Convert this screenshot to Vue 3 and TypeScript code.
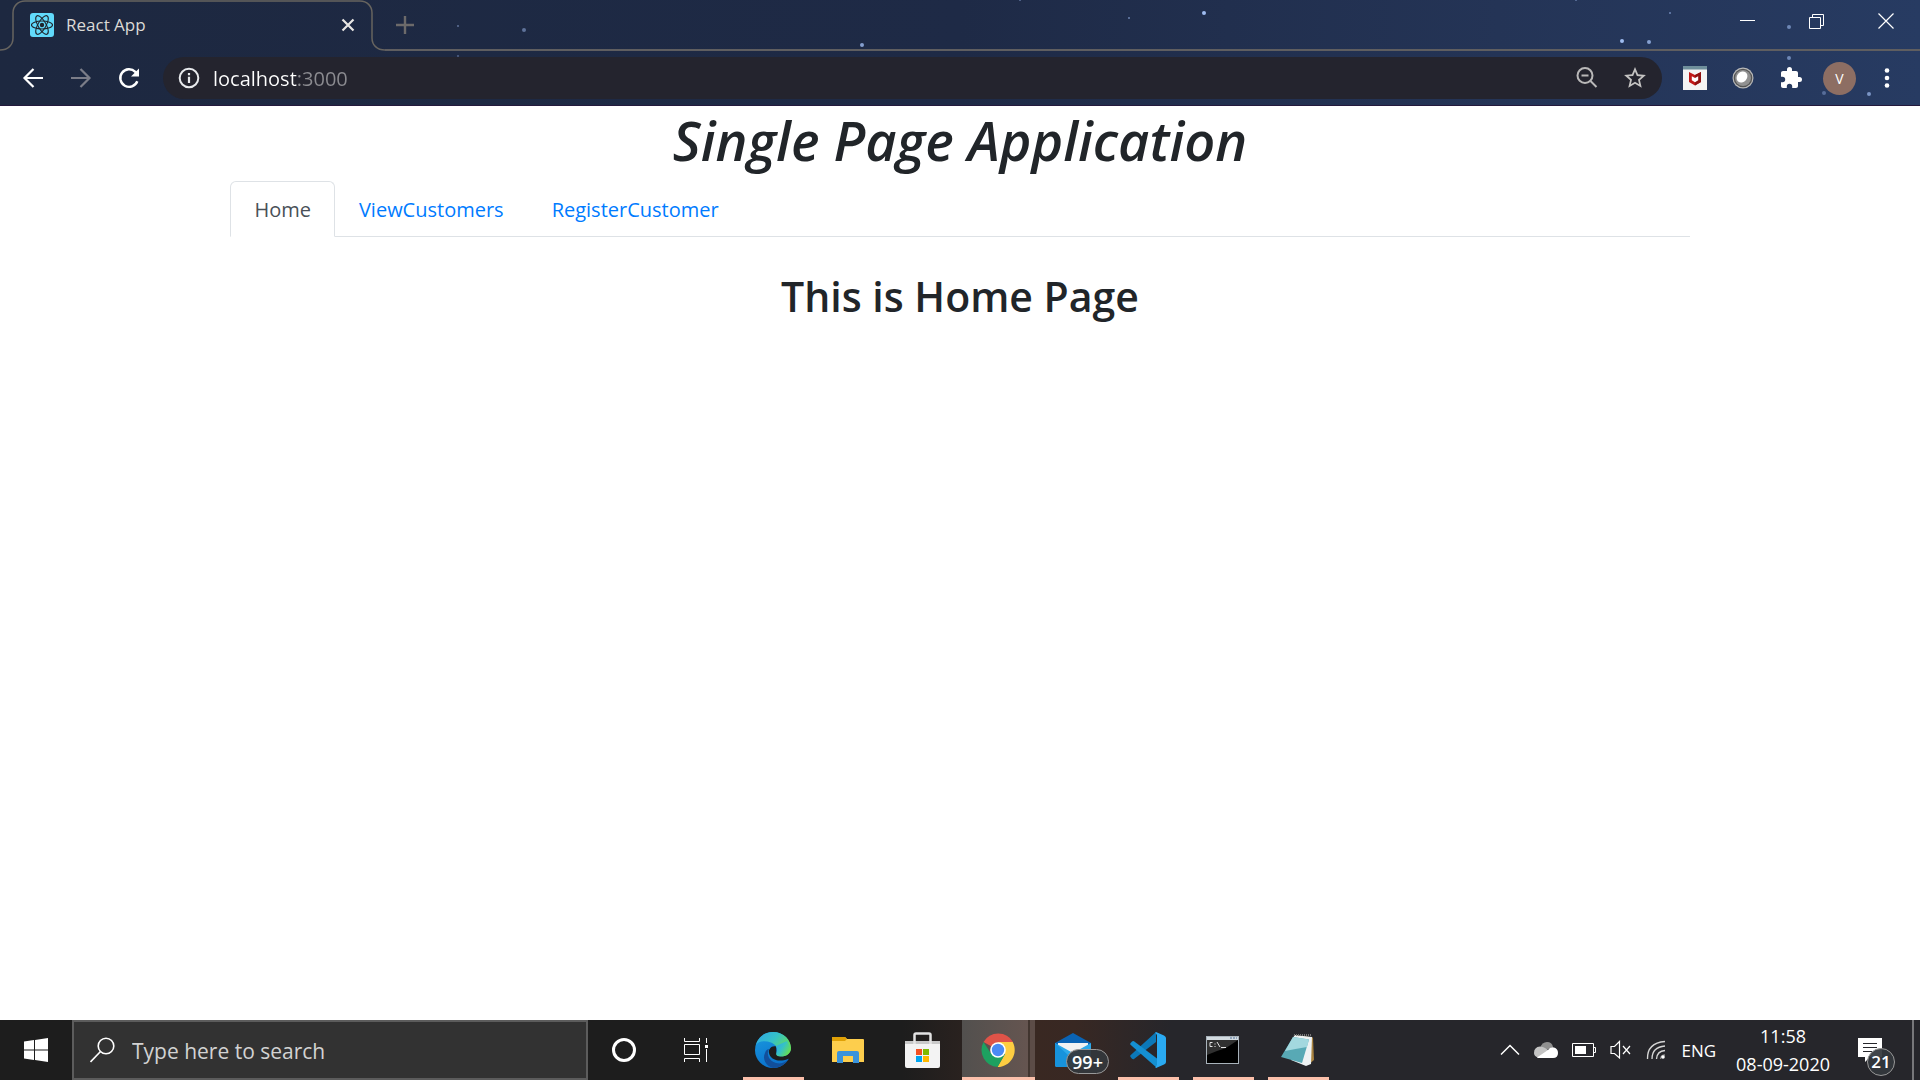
<script setup lang="ts">
import { ref } from 'vue'

interface Star { x: number; y: number; r: number; o: number }
interface Page { id: string; label: string; heading: string }

const stars: Star[] = [
  { x: 458, y: 26, r: 1, o: 0.5 },
  { x: 524, y: 30, r: 2, o: 0.5 },
  { x: 458, y: 56, r: 1, o: 0.4 },
  { x: 862, y: 45, r: 2, o: 0.8 },
  { x: 1020, y: 0, r: 1, o: 0.5 },
  { x: 1129, y: 18, r: 1, o: 0.6 },
  { x: 1204, y: 13, r: 2, o: 1 },
  { x: 1576, y: 0, r: 1, o: 0.5 },
  { x: 1670, y: 13, r: 1, o: 0.6 },
  { x: 1622, y: 41, r: 2, o: 1 },
  { x: 1649, y: 42, r: 2, o: 0.8 },
  { x: 1789, y: 27, r: 2, o: 0.6 },
  { x: 1789, y: 58, r: 2, o: 0.6 },
  { x: 1824, y: 93, r: 2, o: 0.4 },
  { x: 1869, y: 94, r: 2, o: 0.7 },
]

const pages: Page[] = [
  { id: 'home', label: 'Home', heading: 'This is Home Page' },
  { id: 'view', label: 'ViewCustomers', heading: 'This is ViewCustomers Page' },
  { id: 'register', label: 'RegisterCustomer', heading: 'This is RegisterCustomer Page' },
]
const current = ref<Page>(pages[0])
const address = ref('localhost:3000')
const query = ref('')
</script>

<template>
  <div class="screen">
    <header class="browser">
      <svg class="stars" width="1920" height="105" aria-hidden="true">
        <circle v-for="(s, i) in stars" :key="i" :cx="s.x" :cy="s.y" :r="s.r" :opacity="s.o" fill="#9fbcf0" />
      </svg>

      <div class="strip">
        <div class="tab">
          <svg class="outline" width="385" height="51" viewBox="0 0 385 51" fill="none" stroke="#67645f" stroke-width="1.5" aria-hidden="true">
            <path d="M0 50C8 50 13 45 13 38V13C13 6 18 1 25 1H360C367 1 372 6 372 13V38C372 45 377 50 385 50" />
          </svg>
          <svg width="24" height="24" viewBox="0 0 24 24" aria-hidden="true">
            <rect width="24" height="24" rx="3" fill="#61dafb" />
            <g fill="none" stroke="#20232a" stroke-width="1.1">
              <ellipse cx="12" cy="12" rx="10.5" ry="4" />
              <ellipse cx="12" cy="12" rx="10.5" ry="4" transform="rotate(60 12 12)" />
              <ellipse cx="12" cy="12" rx="10.5" ry="4" transform="rotate(120 12 12)" />
            </g>
            <circle cx="12" cy="12" r="2.2" fill="#20232a" />
          </svg>
          <span class="tab-title">React App</span>
          <button class="icon-btn" aria-label="Close tab">
            <svg width="24" height="24" viewBox="0 0 24 24" stroke="#e8e6e3" stroke-width="2.2"><path d="M6.500 6.500 17.500 17.500M17.500 6.500 6.500 17.500" /></svg>
          </button>
        </div>
        <div class="strip-rest">
          <button class="icon-btn new-tab" aria-label="New tab">
            <svg width="24" height="24" viewBox="0 0 24 24" stroke="#6c6a6a" stroke-width="2.4"><path d="M12 3V21M3 12H21" /></svg>
          </button>
          <div class="win">
            <button class="win-btn" aria-label="Minimize">
              <svg width="16" height="16" viewBox="0 0 16 16" stroke="#fff"><path d="M0 7.500H15" /></svg>
            </button>
            <button class="win-btn" aria-label="Restore">
              <svg width="16" height="16" viewBox="0 0 16 16" fill="none" stroke="#fff"><path d="M.5 4.500H11.500V15.500H.5ZM3.500 4.500V1.500H14.500V12.500H11.500" /></svg>
            </button>
            <button class="win-btn" aria-label="Close">
              <svg width="16" height="16" viewBox="0 0 16 16" stroke="#fff" stroke-width="1.2"><path d="M.5 .5 15.500 15.500M15.500 .5 .5 15.500" /></svg>
            </button>
          </div>
        </div>
      </div>

      <div class="toolbar">
        <div class="nav-btns">
          <button class="icon-btn" aria-label="Back">
            <svg width="24" height="24" viewBox="0 0 24 24" fill="none" stroke="#fff" stroke-width="2.2"><path d="M22 12H4M12.500 3 3.500 12 12.500 21" /></svg>
          </button>
          <button class="icon-btn" aria-label="Forward">
            <svg width="24" height="24" viewBox="0 0 24 24" fill="none" stroke="#7b7d88" stroke-width="2.2"><path d="M2 12H20M11.500 3 20.500 12 11.500 21" /></svg>
          </button>
          <button class="icon-btn" aria-label="Reload">
            <svg width="24" height="24" viewBox="0 0 24 24" fill="none" stroke="#fff" stroke-width="2.4"><path d="M20.300 15.200A8.800 8.800 0 1 1 18.300 5.800L20 7.500" /><path d="M22 2.500V10.500H14Z" fill="#fff" stroke="none" /></svg>
          </button>
        </div>
        <label class="omnibox">
          <svg width="24" height="24" viewBox="0 0 24 24" fill="none" stroke="#e8eaed" stroke-width="2"><circle cx="12" cy="12" r="9.300" /><path d="M12 10.800V17M12 7V9.200" stroke-width="2.2" /></svg>
          <input v-model="address" class="url" type="text" aria-label="Address" spellcheck="false" />
          <button class="icon-btn" aria-label="Zoom">
            <svg width="24" height="24" viewBox="0 0 24 24" fill="none" stroke="#b9b8b8" stroke-width="2"><circle cx="10" cy="9.500" r="7.500" /><path d="M6.500 9.500H13.500M15.500 15 21.500 21" /></svg>
          </button>
          <button class="icon-btn" aria-label="Bookmark">
            <svg width="24" height="24" viewBox="1 1 22 22" fill="#c4c3c2"><path d="M22 9.240l-7.190-.62L12 2 9.190 8.630 2 9.240l5.460 4.730L5.820 21 12 17.270 18.180 21l-1.630-7.030L22 9.240zM12 15.400l-3.760 2.270 1-4.280-3.320-2.880 4.380-.38L12 6.100l1.710 4.040 4.380.38-3.320 2.880 1 4.280L12 15.400z" /></svg>
          </button>
        </label>
        <div class="extensions">
          <button class="icon-btn" aria-label="McAfee WebAdvisor">
            <svg width="24" height="24" viewBox="0 0 24 24"><path d="M0 0H24V24H0Z" fill="#f4f4f4" /><path d="M0 0H24V3.500H0Z" fill="#6f8f9b" /><path d="M6 6 12 9 18 6V16L12 19.500 6 16Z" fill="#c01818" /><path d="M12 9 18 6V16L12 19.500Z" fill="#8f1212" /><path d="M8.800 10.200 12 12 15.200 10.200V14.300L12 16.200 8.800 14.300Z" fill="#fff" /></svg>
          </button>
          <button class="icon-btn" aria-label="Extension">
            <svg width="24" height="24" viewBox="0 0 24 24"><circle cx="12" cy="12" r="10.500" fill="#b9b9b9" /><circle cx="12" cy="12" r="9.300" fill="#555" /><circle cx="12" cy="12" r="8" fill="#919191" /><ellipse cx="11" cy="11" rx="5" ry="6" fill="#fff" transform="rotate(40 11 11)" /></svg>
          </button>
          <button class="icon-btn" aria-label="Extensions">
            <svg width="24" height="24" viewBox="0 0 24 24" fill="#fff"><path d="M20.500 11H19V7c0-1.100-.9-2-2-2h-4V3.500a2.500 2.500 0 0 0-5 0V5H4c-1.100 0-1.990.9-1.990 2v3.800H3.500a2.700 2.700 0 0 1 0 5.400H2V20c0 1.100.9 2 2 2h3.800v-1.500a2.700 2.700 0 0 1 5.400 0V22H17c1.100 0 2-.9 2-2v-4h1.500a2.500 2.500 0 0 0 0-5z" /></svg>
          </button>
          <button class="avatar" aria-label="Profile">V</button>
          <button class="icon-btn" aria-label="Menu">
            <svg width="24" height="24" viewBox="0 0 24 24" fill="#fff"><circle cx="11" cy="4.500" r="2.300" /><circle cx="11" cy="12" r="2.300" /><circle cx="11" cy="19.500" r="2.300" /></svg>
          </button>
        </div>
      </div>
    </header>

    <main class="page">
      <h1>Single Page Application</h1>
      <nav class="tabs">
        <a v-for="p in pages" :key="p.id" :href="'#' + p.id" class="link" :class="{ active: p.id === current.id }" @click="current = p">{{ p.label }}</a>
      </nav>
      <h2>{{ current.heading }}</h2>
    </main>

    <footer class="taskbar">
      <button class="start" aria-label="Start">
        <svg width="24" height="24" viewBox="0 0 24 24" fill="#fff"><path d="M0 3.400 10 2.100V11.500H0ZM11 2 24 0V11.500H11ZM0 12.500H10V21.900L0 20.600ZM11 12.500H24V24L11 22Z" /></svg>
      </button>
      <label class="search">
        <svg width="26" height="26" viewBox="0 0 26 26" fill="none" stroke="#fff" stroke-width="1.600"><circle cx="16" cy="9" r="7.800" /><path d="M10.500 14.500 .5 25" /></svg>
        <input v-model="query" type="text" placeholder="Type here to search" aria-label="Search" />
      </label>
      <button class="task" aria-label="Cortana">
        <svg width="26" height="26" viewBox="0 0 26 26" fill="none"><circle cx="13" cy="13" r="10.500" stroke="#fff" stroke-width="3" /></svg>
      </button>
      <button class="task" aria-label="Task View">
        <svg width="24" height="24" viewBox="0 0 24 24" fill="none" stroke="#fff"><path d="M.5 0V3.500H15.500V0M.5 24V20.500H15.500V24M.5 6.500H15.500V16.500H.5ZM22.500 0V5M22.500 11V24" /><path d="M21 7H24V10H21Z" fill="#fff" stroke="none" /></svg>
      </button>
      <div class="apps">
        <button class="app" aria-label="Microsoft Edge">
          <svg width="36" height="36" viewBox="0 0 36 36">
            <defs>
              <linearGradient id="edge-top" x1="0" y1="0" x2="1" y2="0.6"><stop offset="0" stop-color="#2fa6e6" /><stop offset="0.500" stop-color="#35c1c8" /><stop offset="1" stop-color="#68e04c" /></linearGradient>
              <linearGradient id="edge-left" x1="0" y1="0" x2="0.4" y2="1"><stop offset="0" stop-color="#1a9be0" /><stop offset="1" stop-color="#0b72cc" /></linearGradient>
            </defs>
            <circle cx="18" cy="18" r="18" fill="url(#edge-left)" />
            <path d="M1 13C3 5 10 0 18 0C29 0 36 8 36 16C36 22 31 24.500 26 24.500C22 24.500 20.500 23 21.500 21C24 16 20 12 16 10.500C10 8 3 9 1 13Z" fill="url(#edge-top)" />
            <path d="M14 17C11 22 14 29 21 31C27 32.500 31 30 33.500 27C30 33 24 36 18 36C11 34 7 27 10 21C11 18 12.500 17 14 17Z" fill="#124f9b" />
            <path d="M21 14.500C17 13 13 17 14 21C15 27 23 31 33 27L36 26V16C36 22 31 24.500 26 24.500C22 24.500 20.500 23 21.500 21Z" fill="#1d1d1d" />
            <path d="M21 14C24 18 20 21 22 23C26 26 36 24 36 16L32 9Z" fill="url(#edge-top)" />
          </svg>
          <span class="bar" />
        </button>
        <button class="app" aria-label="File Explorer">
          <svg width="32" height="28" viewBox="0 0 32 28"><path d="M0 2Q0 1 1 1H13L15 3H31Q32 3 32 4V26H0Z" fill="#fdce4d" /><path d="M0 2Q0 1 1 1H13L15 3 13 5H0Z" fill="#e0a106" /><path d="M5 27V17Q5 15 7 15H25Q27 15 27 17V27H21V20H11V27Z" fill="#3a93dc" /></svg>
        </button>
        <button class="app" aria-label="Microsoft Store">
          <svg width="36" height="36" viewBox="0 0 36 36"><path d="M0 9H35V34Q35 36 33 36H2Q0 36 0 34Z" fill="#f3f3f3" /><path d="M0 9H35V12H0Z" fill="#c9c9c9" /><path d="M9.500 12V3Q9.500 1.500 11 1.500H24Q25.500 1.500 25.500 3V12" fill="none" stroke="#e3e3e3" stroke-width="2.500" /><path d="M11 17H17V23H11Z" fill="#f25022" /><path d="M18 17H24V23H18Z" fill="#7fba00" /><path d="M11 24H17V30H11Z" fill="#00a4ef" /><path d="M18 24H24V30H18Z" fill="#ffb900" /></svg>
        </button>
        <button class="app running" aria-label="Google Chrome">
          <svg width="34" height="34" viewBox="0 0 34 34"><path d="M17 17 2.500 9A17 17 0 0 1 32 9Z" fill="#df5348" /><path d="M17 9H31.700A17 17 0 0 1 16.500 34L24 21Z" fill="#fdcd41" /><path d="M2.500 9A17 17 0 0 0 16.500 34L24 21 17 17 10 20.500Z" fill="#1da160" /><circle cx="17" cy="17" r="7.800" fill="#fff" /><circle cx="17" cy="17" r="6.200" fill="#4a8af4" /></svg>
          <span class="bar" />
        </button>
        <button class="app" aria-label="Mail">
          <svg width="36" height="34" viewBox="0 0 36 34"><path d="M0 10 18 0 36 10V18H0Z" fill="#0a63b4" /><path d="M3 10H33V20L18 26 3 20Z" fill="#f2f2f2" /><path d="M0 10 18 20 36 10V32Q36 34 34 34H2Q0 34 0 32Z" fill="#2ca9ea" /><path d="M0 10 26 34H2Q0 34 0 32Z" fill="#1793dc" /></svg>
          <span class="badge">99+</span>
        </button>
        <button class="app" aria-label="Visual Studio Code">
          <svg width="36" height="36" viewBox="0 0 36 36"><path d="M26 0V10L4 27Q3 27.500 2 26.700L.6 25Q-.3 24 .8 23Z" fill="#0c78b8" /><path d="M.8 13Q-.3 12 .6 11L2 9.500Q3 8.600 4 9.300L27 26.500V36Z" fill="#1590d2" /><path d="M26 0 34 3.500Q36 4.500 36 6V30Q36 31.500 34 32.500L26 36Q24.500 36 27 33V3Q24.500 0 26 0Z" fill="#2aaaf2" /></svg>
          <span class="bar" />
        </button>
        <button class="app" aria-label="Command Prompt">
          <svg width="33" height="28" viewBox="0 0 33 28"><rect x=".5" y=".5" width="32" height="27" fill="#000" stroke="#a9b3bb" /><path d="M1 1H32V4H1Z" fill="#d2dae0" /><path d="M1 4H32L20 12Q10 15 1 19Z" fill="#303030" /><path d="M24 2H26M27 2H29M30 2H31" stroke="#4f6f95" /><path d="M6.500 6.500H4V10.500H6.500M9 7.500V8.500M9 10V11M11 6 14 11M15 11.500H20" fill="none" stroke="#e2e2e2" /></svg>
          <span class="bar" />
        </button>
        <button class="app" aria-label="Notepad">
          <svg width="34" height="34" viewBox="0 0 34 34"><path d="M13 2 32 4.500 33 27 27 32Z" fill="#a98340" /><path d="M13 2 31 4 30 31 25 33 10 27Z" fill="#eef2f3" /><path d="M12 4 28 6.500 21 30 0 24Z" fill="#58a9b5" /><path d="M12 4 28 6.500 26 14Q14 16 4 18Z" fill="#a3d8df" /><path d="M13 2H31" stroke="#777" stroke-width="2" stroke-dasharray="1 1" /></svg>
          <span class="bar" />
        </button>
      </div>
      <div class="tray">
        <button class="icon-btn" aria-label="Show hidden icons">
          <svg width="20" height="12" viewBox="0 0 20 12" fill="none" stroke="#fff" stroke-width="1.500"><path d="M1 10.500 10 1.500 19 10.500" /></svg>
        </button>
        <svg width="24" height="16" viewBox="0 0 24 16" aria-hidden="true"><path d="M6 6Q8 0 13 0Q18 0 19 5L10 9Z" fill="#8f8f8f" /><path d="M0 11Q0 5 6 4.500Q9 4.500 11 6L20 12 4 15.500Q0 14 0 11Z" fill="#c3c3c3" /><path d="M3 15.500 14 8Q16 4.500 20 5.500Q24 6.500 24 11Q24 16 19 16H5Q3.500 16 3 15.500Z" fill="#fff" /></svg>
        <svg width="24" height="14" viewBox="0 0 24 14" fill="none" stroke="#fff" aria-hidden="true"><path d="M.5 .5H21.500V13.500H.5ZM22 4.500H23.500V9.500H22" /><path d="M3 3H14V11H3Z" fill="#fff" stroke="none" /></svg>
        <svg width="22" height="20" viewBox="0 0 22 20" fill="none" stroke="#fff" stroke-width="1.200" aria-hidden="true"><path d="M1 6.500H4.500L9.500 1.500V18L4.500 13.500H1ZM13 6 20 14M20 6 13 14" /></svg>
        <svg width="20" height="20" viewBox="0 0 20 20" fill="none" stroke="#d5d5d5" stroke-width="1.300" aria-hidden="true"><path d="M1.500 19Q1 3 19 1.500M6 19Q6 7 19 6M10.500 19Q11 11 19 10.500" /><path d="M14.500 19Q15 15 19 15" stroke="#888" /><circle cx="17" cy="17" r="1.800" fill="#fff" stroke="none" /></svg>
        <span class="lang">ENG</span>
        <div class="clock"><time>11:58</time><time>08-09-2020</time></div>
        <button class="notes" aria-label="Notifications">
          <svg width="24" height="24" viewBox="0 0 24 24"><path d="M0 0H24V19H12L7 24V19H0Z" fill="#fff" /><path d="M5 5.500H19M5 9.500H19M5 13.500H14" stroke="#26262b" /></svg>
          <span class="count">21</span>
        </button>
      </div>
      <button class="desktop" aria-label="Show desktop" />
    </footer>
  </div>
</template>

<style>
body { background: #fff; }
</style>

<style scoped>
* { box-sizing: border-box; }
button, input { font: inherit; color: inherit; background: none; border: 0; padding: 0; margin: 0; outline: 0; }
svg { display: block; flex: none; }
.screen { display: flex; flex-direction: column; min-height: 100vh; font-family: "Open Sans", "Noto Sans", sans-serif; color: #212529; }
.icon-btn { display: flex; align-items: center; justify-content: center; }

.browser { position: relative; overflow: hidden; background: linear-gradient(90deg, #1d2840 0%, #1e2a46 50%, #243456 78%, #273b62 100%); border-bottom: 1px solid #24193c; }
.stars { position: absolute; top: 0; left: 0; }
.strip { position: relative; display: flex; height: 51px; }
.tab { position: relative; display: flex; align-items: center; width: 385px; padding: 0 25px 2px 30px; }
.outline { position: absolute; top: 0; left: 0; }
.tab-title { flex: 1; padding-left: 12px; font-size: 17px; color: #dcdad6; }
.strip-rest { flex: 1; display: flex; justify-content: space-between; border-bottom: 2px solid #5f5e60; }
.new-tab { margin-left: 8px; }
.win { display: flex; height: 42px; }
.win-btn { display: flex; align-items: center; justify-content: center; width: 69px; }

.toolbar { position: relative; display: flex; align-items: center; height: 54px; padding: 0 20px 0 21px; }
.nav-btns, .extensions { display: flex; align-items: center; gap: 24px; }
.omnibox { flex: 1; display: flex; align-items: center; gap: 24px; height: 42px; margin: 0 21px 0 22px; padding: 0 15px 0 14px; border-radius: 21px; background: #24242e; }
.url { flex: 1; min-width: 0; margin-left: -12px; font-size: 20px; color: transparent; background: linear-gradient(90deg, #fff 84px, #8b8b90 84px); -webkit-background-clip: text; background-clip: text; }
.avatar { width: 33px; height: 33px; margin: 0 -4px; border-radius: 50%; background: #8d6e63; color: #fff; font-size: 14px; }

.page { flex: 1; margin: 0 12%; }
h1 { margin: 0; padding-top: 2px; font-size: 54px; line-height: 64px; font-weight: 600; font-style: italic; text-align: center; }
.tabs { display: flex; margin-top: 9px; border-bottom: 1px solid #dee2e6; }
.link { margin-bottom: -1px; padding: 12px 23px 10px; border: 1px solid transparent; border-radius: 6px 6px 0 0; font-size: 20px; line-height: 32px; color: #007bff; text-decoration: none; }
.link.active { color: #495057; background: #fff; border-color: #dee2e6 #dee2e6 #fff; }
h2 { margin: 33px 0 0; font-size: 41px; line-height: 52px; font-weight: 600; text-align: center; }

.taskbar { display: flex; align-items: stretch; height: 60px; color: #fff; background: linear-gradient(90deg, #1d1d1d 0%, #1d1d1d 47%, #392822 54%, #382823 56%, #26262b 61%, #26262b 100%); }
.start { display: flex; align-items: center; width: 72px; padding-left: 24px; }
.search { display: flex; align-items: center; gap: 16px; width: 516px; padding: 0 16px; border: 2px solid #5c5c5c; background: #323232; }
.search input { flex: 1; min-width: 0; padding-top: 2px; font-size: 21px; }
.search input::placeholder { color: #d2d2d2; opacity: 1; }
.task { display: flex; align-items: center; justify-content: center; width: 72px; }
.apps { display: flex; margin-left: 3px; }
.app { position: relative; display: flex; align-items: center; justify-content: center; width: 75px; }
.bar { position: absolute; left: 8px; right: 6px; bottom: 0; height: 3px; background: #fbc0ab; }
.running::before { content: ""; position: absolute; top: 0; bottom: 0; left: 2px; right: 0; background: linear-gradient(90deg, #52504e 0, #655550 66px, #41352f 66px, #41352f 68px, #5c4c47 68px); }
.running svg { position: relative; }
.running .bar { left: 2px; right: 0; }
.badge, .count { position: absolute; display: flex; align-items: center; justify-content: center; border: 1px solid #999; background: #33383cee; font-weight: 600; line-height: 20px; }
.badge { left: 31px; top: 29px; width: 43px; height: 25px; border-radius: 13px; font-size: 18px; }
.tray { display: flex; align-items: center; gap: 14px; margin-left: auto; }
.lang { margin-left: 1px; font-size: 17px; }
.clock { display: flex; flex-direction: column; align-items: center; margin: 0 14px 0 6px; font-size: 18px; line-height: 28px; }
.notes { position: relative; margin-right: 30px; }
.count { left: 9px; top: 10px; width: 28px; height: 28px; border-radius: 50%; font-size: 17px; }
.desktop { width: 8px; border-left: 2px solid #77777a; }
</style>
